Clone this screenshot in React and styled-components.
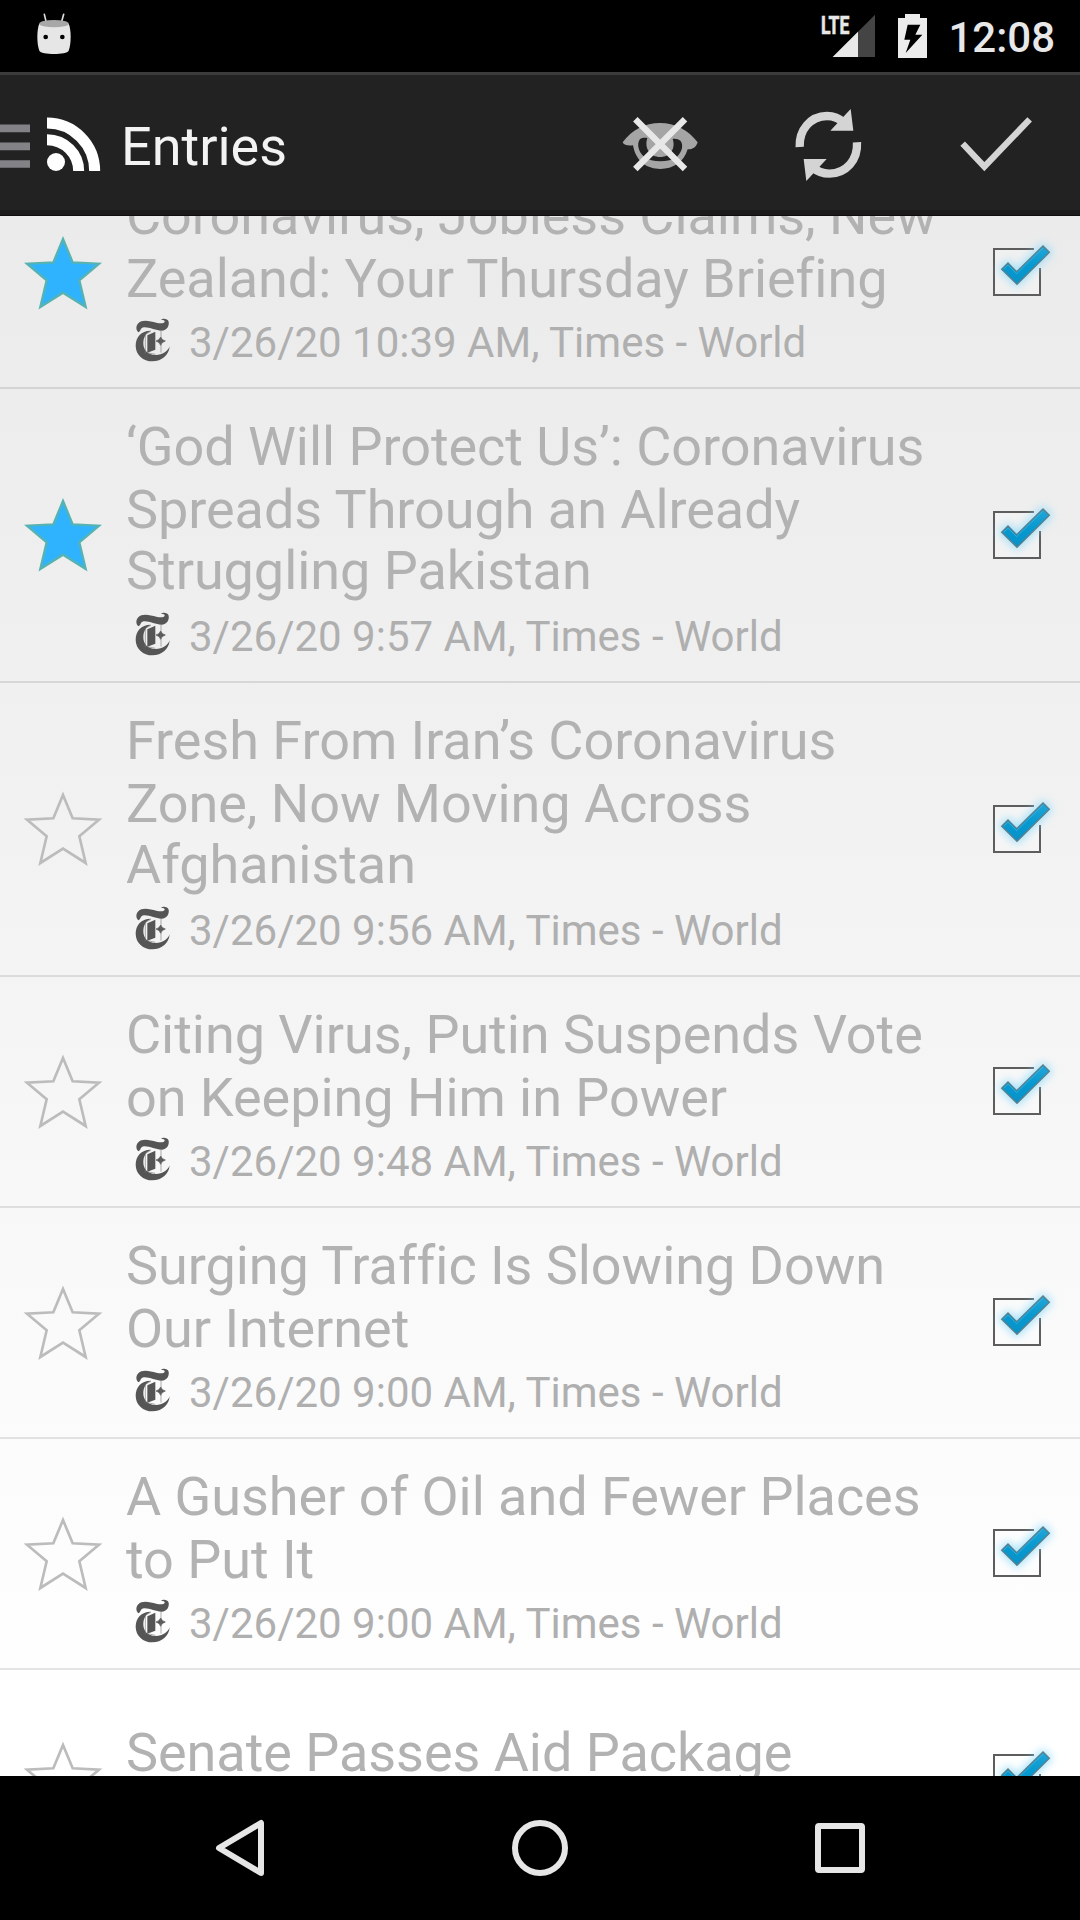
import React from "react";
import styled, { createGlobalStyle } from "styled-components";

const GlobalStyle = createGlobalStyle`
  * { box-sizing: border-box; }
  body { margin: 0; background: #000; font-family: Roboto, "Liberation Sans", sans-serif; }
  svg { display: block; flex: none; }
`;

const Screen = styled.div`
  width: 1080px;
  height: 1920px;
  display: flex;
  flex-direction: column;
  overflow: hidden;
  background: #000;
`;

const StatusBar = styled.div`
  height: 72px;
  flex: none;
  display: flex;
  align-items: center;
  justify-content: space-between;
  padding: 0 25px 0 35px;
  background: #000;
`;

const StatusGroup = styled.div`
  display: flex;
  align-items: center;
  gap: 21px;
`;

const Clock = styled.span`
  padding-top: 2px;
  font-size: 42px;
  line-height: 49px;
  font-weight: 500;
  color: #e8e8e8;
`;

const ActionBar = styled.header`
  height: 144px;
  flex: none;
  display: flex;
  align-items: center;
  background: linear-gradient(#3b3b3b 0 3px, #222 3px 138px, #1b1b1b 138px 143px, #120e10 143px);
`;

const Title = styled.h1`
  flex: 1;
  margin: 0 0 0 19px;
  padding-top: 5px;
  font-size: 54px;
  line-height: 63px;
  font-weight: 400;
  color: #f3f3f3;
`;

const Action = styled.button`
  width: 168px;
  height: 144px;
  padding: 0;
  border: 0;
  background: none;
  display: flex;
  align-items: center;
  justify-content: center;
`;

const Viewport = styled.main`
  height: 1560px;
  flex: none;
  overflow: hidden;
  background: linear-gradient(#ebebeb 0, #efefef 390px, #f3f3f3 700px, #f8f8f8 990px, #fcfcfc 1260px, #fff 1530px);
`;

const List = styled.ul`
  list-style: none;
  margin: -58px 0 0;
  padding: 0;
`;

const Row = styled.li`
  display: flex;
  align-items: center;
  height: ${(p) => p.$height}px;
  border-bottom: 2px solid rgba(0, 0, 0, 0.1);
`;

const StarCell = styled.div`
  width: 126px;
  flex: none;
  padding-left: 20px;
`;

const Body = styled.div`
  flex: 1;
  align-self: flex-start;
  padding-top: ${(p) => p.$top}px;
`;

const Headline = styled.div`
  color: #b2b2b2;
  font-size: 54px;
  letter-spacing: -0.05px;
  white-space: nowrap;
`;

const Line = styled.div`
  line-height: 63px;
  &:nth-child(3) {
    line-height: 59px;
    padding-bottom: 4px;
  }
`;

const Meta = styled.div`
  display: flex;
  align-items: center;
  height: 49px;
  margin-top: 8px;
  padding-left: 9px;
  gap: 18px;
  color: #afafaf;
  font-size: 42px;
  line-height: 49px;
  white-space: nowrap;
`;

const LogoBox = styled.span`
  padding-bottom: 5px;
`;

const CheckCell = styled.div`
  flex: none;
  width: 120px;
  padding-top: 15px;
`;

const NavBar = styled.nav`
  height: 144px;
  flex: none;
  display: grid;
  grid-template-columns: repeat(3, 300px);
  justify-content: center;
  align-items: center;
  justify-items: center;
  background: #000;
`;

const Star = ({ on }) => (
  <svg width="86" height="86" viewBox="60 53 258 258">
    <path
      d="M189 80 218 150 297 154 238 204 257 284 189 241 121 284 140 204 81 154 160 150Z"
      fill={on ? "#30b3ff" : "none"}
      stroke={on ? "#56b3b2" : "#bcbcbc"}
      strokeWidth={on ? 7 : 8}
    />
  </svg>
);

const Checkbox = () => (
  <svg width="120" height="120" viewBox="0 0 360 360">
    <defs>
      <filter id="glow" x="-50%" y="-50%" width="200%" height="200%">
        <feGaussianBlur stdDeviation="13" />
      </filter>
      <linearGradient id="tick" x1="0" y1="0" x2="0" y2="1">
        <stop offset="0" stopColor="#22a6d8" />
        <stop offset="0.5" stopColor="#0699d0" />
        <stop offset="1" stopColor="#0892c8" />
      </linearGradient>
    </defs>
    <path d="M102 87H240V225H102Z" fill="#fff" fillOpacity=".25" />
    <path d="M222 87H102V225H240V144" fill="none" stroke="#5d5d5d" strokeWidth="6" />
    <path d="M123 148 144 127 170 153 249 76 270 97 171 195Z" fill="#8fdcfa" stroke="#8fdcfa" strokeWidth="12" opacity=".8" filter="url(#glow)" />
    <path d="M125 148 144 129 170 155 249 78 268 97 171 193Z" fill="url(#tick)" stroke="#5b7f8d" strokeWidth="4" />
    <path d="M131 148 144 135 170 161 249 84" fill="none" stroke="#5cc4e8" strokeWidth="2" opacity=".7" />
  </svg>
);

const TimesLogo = () => (
  <svg width="36" height="44" viewBox="76 54 108 132">
    <g fill="#555">
      <path d="M87 97C78 92 78 77 86 70C98 57 122 64 140 68C151 71 163 71 165 65C166 61 160 59 154 60C160 54 174 56 177 65C179 77 173 91 155 92C139 92 119 81 103 82C92 83 95 91 87 97Z" />
      <path d="M124 92C96 91 78 111 78 137C78 165 101 184 128 184C157 184 178 165 180 139C174 155 158 165 139 165C116 166 101 152 101 130C101 111 109 99 124 92Z" />
      <path d="M113 106 137 95V149L113 158Z" />
      <path d="M153 111Q156 120 167 123Q156 126 153 136Q150 126 139 123Q150 120 153 111Z" stroke="#555" strokeWidth="2" />
    </g>
    <path d="M154 91V158M107 102V160M107 103 124 94M113 158 137 163" fill="none" stroke="#777" strokeWidth="1.8" />
  </svg>
);

const AndroidHead = () => (
  <svg width="40" height="48" viewBox="105 33 120 144">
    <path d="M133 40 139 65M191 40 184 65" stroke="#dcdcdc" strokeWidth="5" strokeLinecap="round" />
    <path d="M118 68C110 86 110 128 118 149C123 162 201 162 206 149C214 128 214 86 206 68Z" fill="#e6e6e6" />
    <ellipse cx="162" cy="68" rx="44" ry="11" fill="#a8a8a8" />
    <circle cx="137" cy="108" r="7" />
    <circle cx="187" cy="108" r="7" />
  </svg>
);

const Signal = () => (
  <svg width="56" height="72" viewBox="120 0 168 216">
    <path d="M282 44V171H155Z" fill="#444" />
    <path d="M231 95V171H155Z" fill="#e8e8e8" />
    <text x="120" y="101" fontSize="79" fontWeight="700" fill="#e8e8e8" stroke="#e8e8e8" strokeWidth="2" textLength="85" lengthAdjust="spacingAndGlyphs">LTE</text>
  </svg>
);

const Battery = () => (
  <svg width="29" height="72" viewBox="357 0 87 216">
    <path d="M357 54H378V42H423V54H444V174H357Z" fill="#ececec" />
    <path d="M386 74H424L409 104H430L380 159L394 119H376Z" />
  </svg>
);

const Drawer = () => (
  <svg width="45" height="48" viewBox="0 0 45 48">
    <path d="M0 8.3H30M0 26.3H30M0 44H30" stroke="#838387" strokeWidth="7.7" />
  </svg>
);

const Feed = () => (
  <svg width="57" height="60" viewBox="135 342 171 180">
    <circle cx="168" cy="486" r="27" fill="#fff" />
    <path d="M141 419A95 94 0 0 1 236 513M141 369A143 144 0 0 1 284 513" fill="none" stroke="#fff" strokeWidth="33" />
  </svg>
);

const HideRead = () => (
  <svg width="96" height="96" viewBox="36 18 288 288">
    <path
      fillRule="evenodd"
      d="M68 157C95 120 135 99 180 99C225 99 265 120 293 157C288 173 276 179 263 178C252 217 219 237 181 237C143 237 108 217 99 166C86 168 71 166 68 157ZM120 147C109 163 116 186 132 200C156 218 206 218 231 200C246 186 251 166 242 153C235 147 226 145 218 147C228 176 210 201 181 201C150 201 132 175 142 144C134 143 126 143 120 147Z"
      fill="#a5a5a5"
    />
    <path d="M106 88 255 237M255 88 106 237" stroke="#e8e8e8" strokeWidth="19" />
  </svg>
);

const Refresh = () => (
  <svg width="96" height="96" viewBox="540 18 288 288">
    <g fill="none" stroke="#d4d4d4" strokeWidth="25">
      <path d="M599 171C597 119 631 79 681 78C702 78 719 86 733 99" />
      <path d="M771 157C774 210 739 250 688 251C667 251 650 243 636 231" />
    </g>
    <path d="M752 57 760 122H691ZM619 273 611 207H680Z" fill="#d4d4d4" />
  </svg>
);

const MarkRead = () => (
  <svg width="96" height="96" viewBox="504 288 288 288">
    <path d="M548 431 613 500 749 358" fill="none" stroke="#d4d4d4" strokeWidth="19" />
  </svg>
);

const entries = [
  { lines: ["Coronavirus, Jobless Claims, New", "Zealand: Your Thursday Briefing"], time: "10:39 AM", starred: true },
  { lines: ["‘God Will Protect Us’: Coronavirus", "Spreads Through an Already", "Struggling Pakistan"], time: "9:57 AM", starred: true },
  { lines: ["Fresh From Iran’s Coronavirus", "Zone, Now Moving Across", "Afghanistan"], time: "9:56 AM" },
  { lines: ["Citing Virus, Putin Suspends Vote", "on Keeping Him in Power"], time: "9:48 AM" },
  { lines: ["Surging Traffic Is Slowing Down", "Our Internet"], time: "9:00 AM" },
  { lines: ["A Gusher of Oil and Fewer Places", "to Put It"], time: "9:00 AM" },
  { lines: ["Senate Passes Aid Package"] },
];

const rowHeights = { 1: 219, 2: 231, 3: 294 };

const Entry = ({ lines, time, starred }) => (
  <Row $height={rowHeights[lines.length]}>
    <StarCell><Star on={starred} /></StarCell>
    <Body $top={lines.length === 1 ? 51 : 26}>
      <Headline>{lines.map((l) => <Line key={l}>{l}</Line>)}</Headline>
      {time && <Meta><LogoBox><TimesLogo /></LogoBox>3/26/20 {time}, Times - World</Meta>}
    </Body>
    <CheckCell><Checkbox /></CheckCell>
  </Row>
);

export default function App() {
  return (
    <Screen>
      <GlobalStyle />
      <StatusBar>
        <AndroidHead />
        <StatusGroup>
          <Signal />
          <Battery />
          <Clock>12:08</Clock>
        </StatusGroup>
      </StatusBar>
      <ActionBar>
        <Drawer />
        <Feed />
        <Title>Entries</Title>
        <Action aria-label="Hide read"><HideRead /></Action>
        <Action aria-label="Refresh"><Refresh /></Action>
        <Action aria-label="Mark all read"><MarkRead /></Action>
      </ActionBar>
      <Viewport>
        <List>{entries.map((e) => <Entry key={e.lines[0]} {...e} />)}</List>
      </Viewport>
      <NavBar>
        <svg width="60" height="60" viewBox="0 0 60 60"><path d="M51 5V55L9 30Z" fill="none" stroke="#e6e6e6" strokeWidth="6" strokeLinejoin="round" /></svg>
        <svg width="60" height="60" viewBox="0 0 60 60"><circle cx="30" cy="30" r="25" fill="none" stroke="#e6e6e6" strokeWidth="6" /></svg>
        <svg width="60" height="60" viewBox="0 0 60 60"><rect x="8" y="8" width="44" height="44" rx="1" fill="none" stroke="#e6e6e6" strokeWidth="6" /></svg>
      </NavBar>
    </Screen>
  );
}
